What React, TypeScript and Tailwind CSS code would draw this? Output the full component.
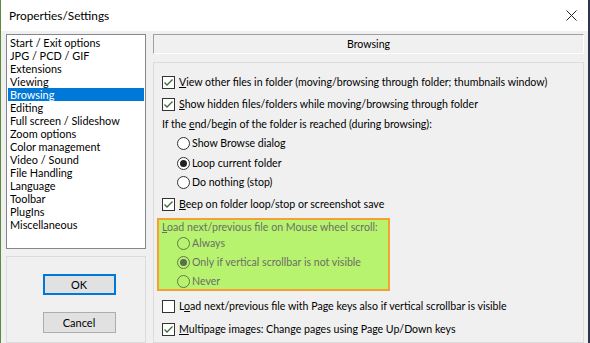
import React from 'react';

const FONT = { fontFamily: 'Lato, "Noto Sans", sans-serif' };

const LIST = [
  'Start / Exit options',
  'JPG / PCD / GIF',
  'Extensions',
  'Viewing',
  'Browsing',
  'Editing',
  'Full screen / Slideshow',
  'Zoom options',
  'Color management',
  'Video / Sound',
  'File Handling',
  'Language',
  'Toolbar',
  'PlugIns',
  'Miscellaneous',
];

const Check: React.FC<{ checked?: boolean }> = ({ checked }) => (
  <span className="w-[13px] h-[13px] border border-[#333] bg-white flex items-center justify-center shrink-0">
    {checked && (
      <svg width="11" height="11" viewBox="0 0 11 11">
        <path d="M1.5 5.5 L4 8 L9.5 2.5" stroke="#3b6b3b" strokeWidth="1.3" fill="none" />
      </svg>
    )}
  </span>
);

const Radio: React.FC<{ on?: boolean; dim?: boolean }> = ({ on, dim }) => (
  <span
    className={
      'w-[13px] h-[13px] rounded-full border flex items-center justify-center shrink-0 ' +
      (dim ? 'border-[#5f7a4f] bg-transparent' : 'border-[#333] bg-white')
    }
  >
    {on && <span className={'w-[7px] h-[7px] rounded-full ' + (dim ? 'bg-[#5a6e52]' : 'bg-[#222]')}></span>}
  </span>
);

const CheckRow: React.FC<{ checked?: boolean; h: string; children: React.ReactNode }> = ({ checked, h, children }) => (
  <div className={'flex items-center gap-[4px] ' + h}>
    <Check checked={checked} />
    <span className="whitespace-nowrap">{children}</span>
  </div>
);

const RadioRow: React.FC<{ on?: boolean; dim?: boolean; className: string; children: React.ReactNode }> = ({
  on,
  dim,
  className,
  children,
}) => (
  <div className={'flex items-center gap-[2px] pl-[15px] ' + className}>
    <Radio on={on} dim={dim} />
    <span className={'whitespace-nowrap ' + (dim ? 'text-[#6a6f66]' : '')}>{children}</span>
  </div>
);

export default function App() {
  return (
    <div
      className="w-[590px] h-[343px] flex flex-col overflow-hidden border-l border-l-[#5b8c3c] border-r-2 border-r-[#2e3350] text-[10.6px] leading-[13px] text-black bg-[#f0f0f0]"
      style={FONT}
    >
      {/* Title bar */}
      <div className="h-[31px] bg-white flex items-center justify-between pl-[8px] pr-[11px] shrink-0">
        <span className="text-[11.8px] leading-[15px]">Properties/Settings</span>
        <svg width="11" height="11" viewBox="0 0 11 11">
          <path d="M0.5 0.5 L10.5 10.5 M10.5 0.5 L0.5 10.5" stroke="#222" strokeWidth="1" />
        </svg>
      </div>

      <div className="flex flex-1 min-h-0 pl-[5px]">
        {/* Left column */}
        <div className="w-[140px] flex flex-col pt-[3px]">
          <div className="h-[215px] bg-white border border-[#828790] pt-[1px] px-[1px] shrink-0 text-[10.9px]">
            {LIST.map((item) => (
              <div
                key={item}
                className={
                  'h-[13px] leading-[13px] pl-[2px] whitespace-nowrap ' +
                  (item === 'Browsing' ? 'bg-[#0078d7] text-white' : 'text-[#000]')
                }
              >
                {item}
              </div>
            ))}
          </div>
          <div className="flex-1 mt-[7px] border border-[#dcdcdc] flex flex-col items-center pt-[17px] pl-[6px] text-[11px]">
            <button className="w-[73px] h-[21px] border-2 border-[#0078d7] bg-[#e1e1e1] flex items-center justify-center">
              OK
            </button>
            <button className="w-[73px] h-[21px] mt-[17px] border border-[#adadad] bg-[#e1e1e1] flex items-center justify-center">
              Cancel
            </button>
          </div>
        </div>

        {/* Right column */}
        <div className="w-[431px] ml-[7px] flex flex-col pt-[3px]">
          <div className="h-[20px] border-t border-l border-t-[#a0a0a0] border-l-[#a0a0a0] border-b border-r border-b-white border-r-white flex items-center justify-center shrink-0">
            Browsing
          </div>
          <div className="flex-1 mt-[8px] border border-[#dcdcdc] pt-[8px] pl-[8px]">
            <CheckRow checked h="h-[22px]">
              <span className="underline">V</span>iew other files in folder (moving/browsing through folder; thumbnails window)
            </CheckRow>
            <CheckRow checked h="h-[22px]">
              <span className="underline">S</span>how hidden files/folders while moving/browsing through folder
            </CheckRow>
            <div className="h-[19px] flex items-center">
              <span className="whitespace-nowrap">
                If the <span className="underline">e</span>nd/begin of the folder is reached (during browsing):
              </span>
            </div>
            <RadioRow className="h-[19px]">Show Browse dialog</RadioRow>
            <RadioRow on className="h-[20px]">
              Loop current folder
            </RadioRow>
            <RadioRow className="h-[19px]">Do nothing (stop)</RadioRow>
            <CheckRow checked h="h-[24px]">
              <span className="underline">B</span>eep on folder loop/stop or screenshot save
            </CheckRow>

            <div className="ml-[-5px] mt-[2px] w-[233px] h-[73px] bg-[#b8f36f] border-2 border-[#f5a030] pl-[3px] flex flex-col">
              <div className="h-[16px] flex items-center text-[#6a6f66]">
                <span className="whitespace-nowrap">
                  <span className="underline">L</span>oad next/previous file on Mouse wheel scroll:
                </span>
              </div>
              <RadioRow dim className="h-[16px]">
                Always
              </RadioRow>
              <RadioRow dim on className="h-[16px] mt-[4px]">
                Only if vertical scrollbar is not visible
              </RadioRow>
              <RadioRow dim className="h-[16px] mt-[3px]">
                Never
              </RadioRow>
            </div>

            <div className="mt-[4px]">
              <CheckRow h="h-[22px]">
                L<span className="underline">o</span>ad next/previous file with Page keys also if vertical scrollbar is visible
              </CheckRow>
              <div className="mt-[1px]">
                <CheckRow checked h="h-[22px]">
                  <span className="underline">M</span>ultipage images: Change pages using Page Up/Down keys
                </CheckRow>
              </div>
            </div>
          </div>
        </div>
      </div>
    </div>
  );
}
